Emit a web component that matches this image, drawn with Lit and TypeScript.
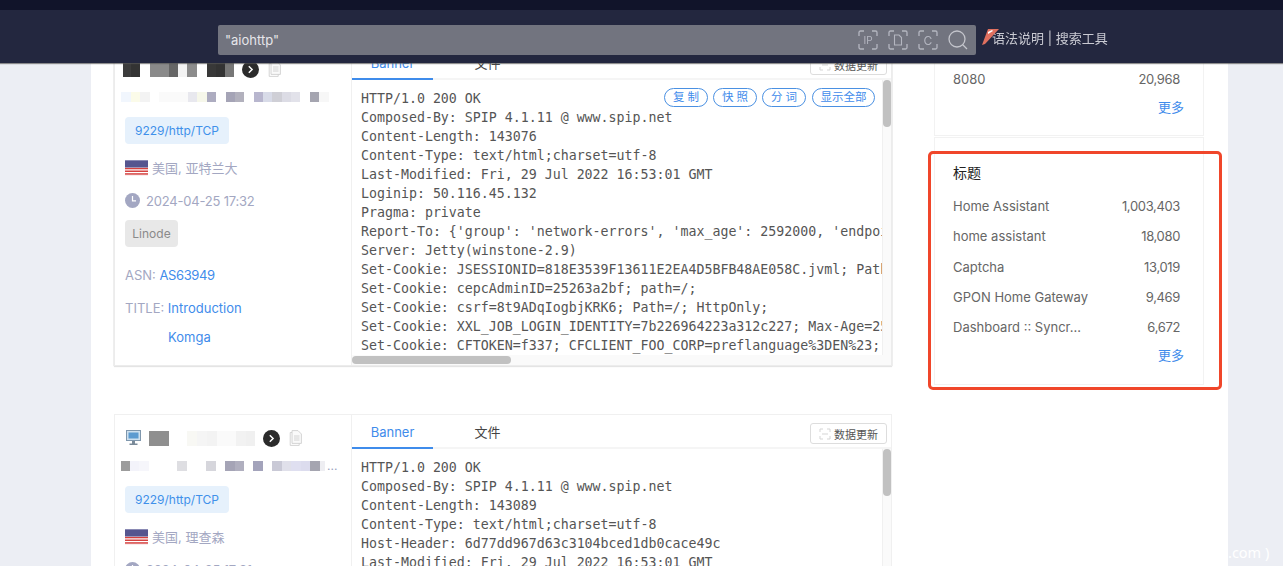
import { LitElement, html, css, svg } from "lit";
import { customElement } from "lit/decorators.js";

type Block = [number, string];
interface CardData {
  row1: Block[];
  row2: Block[];
  monitor: boolean;
  ellipsis: boolean;
  city: string;
  date: string;
  lines: string[];
  pills: boolean;
  extra: boolean;
  thumbH: boolean;
}

const card1: CardData = {
  row1: [[8, "#3c3c3c"], [9, "#333"], [10, "#fff"], [19, "#8a8a8a"], [9, "#666"], [9, "#f3f3f3"], [10, "#8c8c8c"], [10, "#fff"], [9, "#383838"], [9, "#333"], [9, "#777"]],
  row2: [[10, "#f1f6fd"], [9, "#fbfbe9"], [10, "#f3f3f3"], [9, "#fff"], [29, "#fafafa"], [9, "#e8e8ee"], [10, "#f6f7ea"], [9, "#adacc0"], [10, "#fff"], [9, "#a5a4b6"], [9, "#b2b1bd"], [10, "#fff"], [9, "#b8b6ce"], [9, "#d8dbe8"], [10, "#cfcfd6"], [9, "#dcdce5"], [9, "#e2e2ea"], [10, "#fff"], [9, "#a5a5b0"], [10, "#f7f7f7"]],
  monitor: false,
  ellipsis: false,
  city: "美国, 亚特兰大",
  date: "2024-04-25 17:32",
  pills: true,
  extra: true,
  thumbH: true,
  lines: [
    "HTTP/1.0 200 OK",
    "Composed-By: SPIP 4.1.11 @ www.spip.net",
    "Content-Length: 143076",
    "Content-Type: text/html;charset=utf-8",
    "Last-Modified: Fri, 29 Jul 2022 16:53:01 GMT",
    "Loginip: 50.116.45.132",
    "Pragma: private",
    "Report-To: {'group': 'network-errors', 'max_age': 2592000, 'endpoints': []}",
    "Server: Jetty(winstone-2.9)",
    "Set-Cookie: JSESSIONID=818E3539F13611E2EA4D5BFB48AE058C.jvml; Path=/;",
    "Set-Cookie: cepcAdminID=25263a2bf; path=/;",
    "Set-Cookie: csrf=8t9ADqIogbjKRK6; Path=/; HttpOnly;",
    "Set-Cookie: XXL_JOB_LOGIN_IDENTITY=7b226964223a312c227; Max-Age=2592000;",
    "Set-Cookie: CFTOKEN=f337; CFCLIENT_FOO_CORP=preflanguage%3DEN%23;",
  ],
};

const card2: CardData = {
  row1: [[20, "#8f8f8f"], [18, "#fff"], [10, "#f8f8f4"], [10, "#f5f5f5"], [10, "#f3f3f3"], [19, "#fafafa"], [10, "#f2f2f2"], [9, "#f0f0f0"]],
  row2: [[9, "#9c9c9c"], [9, "#f3f3fa"], [10, "#f6f6fb"], [28, "#fff"], [10, "#dedee2"], [19, "#fff"], [10, "#d6d6dc"], [9, "#fff"], [10, "#a5a4b6"], [9, "#b0afbf"], [9, "#fff"], [10, "#a3a3bb"], [9, "#fff"], [10, "#c9c9d6"], [9, "#e0e0ea"], [10, "#dfdff0"], [9, "#dcdcee"], [10, "#a5a5b0"], [5, "#eeeef2"]],
  monitor: true,
  ellipsis: true,
  city: "美国, 理查森",
  date: "2024-04-25 17:31",
  pills: false,
  extra: false,
  thumbH: false,
  lines: [
    "HTTP/1.0 200 OK",
    "Composed-By: SPIP 4.1.11 @ www.spip.net",
    "Content-Length: 143089",
    "Content-Type: text/html;charset=utf-8",
    "Host-Header: 6d77dd967d63c3104bced1db0cace49c",
    "Last-Modified: Fri, 29 Jul 2022 16:53:01 GMT",
  ],
};

const titles: [string, string][] = [
  ["Home Assistant", "1,003,403"],
  ["home assistant", "18,080"],
  ["Captcha", "13,019"],
  ["GPON Home Gateway", "9,469"],
  ["Dashboard :: Syncr...", "6,672"],
];

const corners = svg`<path d="M1 6V2.5A1.5 1.5 0 0 1 2.5 1H6M14 1h3.500A1.500 1.500 0 0 1 19 2.500V6M19 14v3.500a1.500 1.500 0 0 1-1.500 1.500H14M6 19H2.500A1.500 1.500 0 0 1 1 17.500V14" fill="none" stroke="#b4b6c0" stroke-width="1.300"/>`;

const flag = html`<svg class="flag" viewBox="0 0 23 16" width="23" height="16">
  <rect width="23" height="16" fill="#fff"/>
  ${[0, 1, 2, 3].map((i) => svg`<rect y="${i * 2.7 + 7.800}" width="23" height="1.500" fill="#d5413f"/>`)}
  <rect width="23" height="7.500" fill="#55558f"/>
  <rect y="0" width="23" height="1" fill="#8a8ab4"/>
</svg>`;

const docIcon = html`<svg class="doc" viewBox="0 0 14 16" width="14" height="16">
  <path d="M3 .6h6l3.400 3.400v9.400H3z" fill="#fafafa" stroke="#cfcfcf" stroke-width=".9"/>
  <path d="M3 2.500H1.200v12.900h9v-2" fill="none" stroke="#cfcfcf" stroke-width=".9"/>
  <path d="M5 6h5.500M5 8h5.500M5 10h5.500" stroke="#cfcfcf" stroke-width=".9"/>
</svg>`;

const go = html`<svg class="go" viewBox="0 0 17 17" width="17" height="17">
  <circle cx="8.500" cy="8.500" r="8.500" fill="#2b2b2b"/>
  <path d="M6.800 5.200l3.300 3.300-3.300 3.300" fill="none" stroke="#fff" stroke-width="1.500"/>
</svg>`;

const monitorIcon = html`<svg class="mon" viewBox="0 0 15 16" width="15" height="16">
  <rect x=".5" y=".5" width="14" height="10" fill="#cfe0ee" stroke="#7f97ad"/>
  <rect x="2.500" y="2.500" width="10" height="6" fill="#5d9bd0"/>
  <path d="M6 11h3v2.500h2.500V15h-8v-1.500H6z" fill="#7a8a99"/>
</svg>`;

const clockIcon = html`<svg class="clock" viewBox="0 0 15 15" width="15" height="15">
  <circle cx="7.500" cy="7.500" r="7.500" fill="#a3a7c2"/>
  <path d="M7.500 3v4.800H11" fill="none" stroke="#fff" stroke-width="1.200"/>
</svg>`;

@customElement("result-card")
export class ResultCard extends LitElement {
  static properties = { data: { attribute: false } };
  data!: CardData;

  static styles = css`
    :host { display: block; }
    .card {
      display: flex; width: 778px; height: 321px; box-sizing: border-box;
      background: #fff; border: 1px solid #f0f0f0;
      font-family: Inter, "Noto Sans CJK SC", sans-serif;
    }
    .card.strong { border-color: #ececec; box-shadow: 0 1px 1px #e4e4e4, 1px 0 0 #f0f0f0, -1px 0 0 #f0f0f0; }
    .left {
      width: 237px; flex: none; box-sizing: border-box; padding: 14px 0 0 10px;
      display: flex; flex-direction: column; align-items: flex-start; border-right: 1px solid #f0f0f0;
    }
    .r1 { display: flex; align-items: center; height: 18px; width: 225px; margin-left: -2px; }
    .mosaic { display: flex; align-items: stretch; filter: blur(.5px); flex: none; }
    .r1 .mosaic { height: 15px; margin-right: 8px; }
    .mon { margin: 0 8px 0 3px; flex: none; }
    .doc { margin-left: 9px; flex: none; }
    .go { flex: none; }
    .r2 { display: flex; align-items: center; height: 12px; margin: 13px 0 0 -4px; width: 222px; }
    .r2 .mosaic { height: 10px; }
    .dots { color: #9a9fc0; font-size: 12px; line-height: 10px; margin-left: 2px; }
    .tag { display: flex; align-items: center; border-radius: 4px; font-size: 12px; box-sizing: border-box; height: 27px; }
    .tag.port { margin-top: 14px; width: 104px; justify-content: center; background: #e6f1fc; color: #4090ea; }
    .tag.org { margin-top: 11px; width: 53px; justify-content: center; background: #e8e8e8; color: #8a8a8a; }
    .meta { display: flex; align-items: center; color: #a3a7c2; font-size: 13px; height: 17px; }
    .meta.loc { margin-top: 15px; gap: 4px; }
    .meta.time { margin-top: 16px; gap: 6px; letter-spacing: -.2px; }
    .line { font-size: 13px; color: #a3a7c2; height: 20px; line-height: 20px; white-space: nowrap; }
    .line a { color: #3f8ceb; }
    .asn { margin-top: 18px; }
    .asn a { letter-spacing: -.4px; }
    .ttl { margin-top: 13px; }
    .ttl2 { margin-top: 9px; padding-left: 43px; }
    .right { flex: 1; min-width: 0; display: flex; flex-direction: column; position: relative; }
    .tabs {
      display: flex; height: 34px; box-sizing: border-box; flex: none; align-items: stretch;
      border-bottom: 2px solid #f5f5f5; font-size: 13px; position: relative;
    }
    .tab { width: 81px; box-sizing: border-box; display: flex; align-items: center; justify-content: center; color: #444; margin-bottom: -2px; }
    .tab.on { color: #3f8ceb; border-bottom: 2px solid #3f8ceb; padding-top: 2px; }
    .tab + .tab { margin-left: 15px; width: 79px; padding-bottom: 2px; }
    .refresh {
      margin: 8px 4px 0 auto; height: 21px; width: 77px; box-sizing: border-box;
      border: 1px solid #ddd; border-radius: 3px; display: flex; align-items: center; justify-content: center;
      gap: 3px; font-size: 11px; color: #555;
    }
    .body { flex: 1; min-height: 0; display: flex; flex-direction: column; }
    .upper { flex: 1; min-height: 0; display: flex; }
    .text {
      flex: 1; min-width: 0; overflow: hidden; padding: 9px 0 0 9px; margin: 0; box-sizing: border-box;
      font: 13.28px/19px "DejaVu Sans Mono", monospace; color: #555; white-space: pre;
    }
    .text div { width: fit-content; }
    .vbar { width: 9px; flex: none; background: #fafafa; border-left: 1px solid #f0f0f0; box-sizing: border-box; }
    .vbar i { display: block; width: 8px; height: 47px; border-radius: 4px; background: #c1c1c1; }
    .hbar { height: 10px; flex: none; background: #fafafa; }
    .hbar i { display: block; width: 159px; height: 8px; margin-top: 1px; border-radius: 4px; background: #c1c1c1; }
    .pills { position: absolute; top: 42px; left: 312px; display: flex; gap: 5px; }
    .pill {
      height: 19px; box-sizing: border-box; border: 1px solid #4a90e2; border-radius: 10px; background: #fff;
      color: #3f8ceb; font-size: 11.500px; line-height: 17px; width: 44px; text-align: center; letter-spacing: 3px; padding-left: 3px;
    }
    .pill.wide { width: 63px; letter-spacing: 0; padding-left: 0; margin-left: 1px; }
  `;

  private mosaic(blocks: Block[]) {
    return html`<div class="mosaic">${blocks.map(([w, c]) => html`<span style="width:${w}px;background:${c}"></span>`)}</div>`;
  }

  render() {
    const d = this.data;
    return html`<div class="card ${d.extra ? "strong" : ""}">
      <div class="left">
        <div class="r1">
          ${d.monitor ? monitorIcon : ""}
          ${this.mosaic(d.row1)}
          ${go}${docIcon}
        </div>
        <div class="r2">
          ${this.mosaic(d.row2)}
          ${d.ellipsis ? html`<span class="dots">...</span>` : ""}
        </div>
        <div class="tag port">9229/http/TCP</div>
        <div class="meta loc">${flag}<span>${d.city}</span></div>
        <div class="meta time">${clockIcon}<span>${d.date}</span></div>
        <div class="tag org">Linode</div>
        <div class="line asn">ASN: <a>AS63949</a></div>
        <div class="line ttl">TITLE: <a>Introduction</a></div>
        <div class="line ttl2"><a>Komga</a></div>
      </div>
      <div class="right">
        <div class="tabs">
          <div class="tab on">Banner</div>
          <div class="tab">文件</div>
          <div class="refresh">
            <svg viewBox="0 0 12 12" width="12" height="12"><path d="M1 4V1h3M8 1h3v3M11 8v3H8M4 11H1V8M3 6h6" fill="none" stroke="#d5d5d5"/></svg>
            <span>数据更新</span>
          </div>
        </div>
        <div class="body">
          <div class="upper">
            <div class="text">${d.lines.map((l) => html`<div>${l}</div>`)}</div>
            <div class="vbar"><i></i></div>
          </div>
          ${d.thumbH ? html`<div class="hbar"><i></i></div>` : ""}
        </div>
        ${d.pills
          ? html`<div class="pills">
              <div class="pill">复制</div>
              <div class="pill">快照</div>
              <div class="pill">分词</div>
              <div class="pill wide">显示全部</div>
            </div>`
          : ""}
      </div>
    </div>`;
  }
}

@customElement("app-root")
export class AppRoot extends LitElement {
  static styles = css`
    :host { display: block; width: 1286px; height: 571px; background: #fff; overflow: hidden; }
    .page {
      width: 1283px; height: 566px; overflow: hidden; position: relative; display: flex; flex-direction: column;
      font-family: Inter, "Noto Sans CJK SC", sans-serif; filter: blur(.3px);
    }
    .header { flex: none; height: 63px; background: #23273f; border-top: 10px solid #11142a; box-sizing: border-box; position: relative; z-index: 2; display: flex; align-items: flex-start; padding: 15px 0 0 218px; box-shadow: 0 1px 1px #555a; }
    .search {
      width: 758px; height: 30px; background: #72747f; border-radius: 2px; display: flex; align-items: center;
      box-sizing: border-box; padding: 0 8px 0 7px; color: #e6e6ea; font-size: 13px; flex: none;
    }
    .q { flex: 1; }
    .ico { margin-left: 10px; flex: none; }
    .ico.first { margin-left: 0; }
    .links { margin: 5px 0 0 6px; position: relative; padding-left: 10px; color: #c9cad2; font-size: 13px; line-height: 17px; white-space: nowrap; }
    .ribbon { position: absolute; left: 0; top: -1px; }
    .main { flex: 1; min-height: 0; display: flex; background: #eceef4; }
    .content { margin-left: 91px; width: 1137px; background: #fff; display: flex; padding-left: 23px; box-sizing: border-box; overflow: hidden; }
    .cards { margin-top: -18px; width: 778px; flex: none; display: flex; flex-direction: column; gap: 48px; }
    .side { margin: -18px 0 0 42px; width: 270px; flex: none; display: flex; flex-direction: column; gap: 1px; color: #666; font-size: 13px; }
    .box { border: 1px solid #f2f2f2; box-sizing: border-box; padding: 0 19px 0 18px; }
    .box.top { height: 91px; padding-top: 18px; }
    .box.title { height: 248px; padding-top: 25px; }
    h3 { margin: 0 0 8px; font-weight: 400; font-size: 14px; line-height: 20px; color: #222; }
    .row { display: flex; justify-content: space-between; height: 30.300px; align-items: center; padding-right: 4px; }
    .row span + span { letter-spacing: -.35px; }
    .more { color: #3f8ceb; text-align: right; line-height: 20px; margin-top: 3px; }
    .mark { position: absolute; left: 928px; top: 151px; width: 294px; height: 239px; box-sizing: border-box; border: 3px solid #f0462a; border-radius: 5px; z-index: 3; }
    .wm { position: absolute; left: 1228px; top: 542px; color: #fff; font: 14.500px/20px "Noto Sans", sans-serif; z-index: 3; }
  `;

  render() {
    return html`<div class="page">
      <header class="header">
        <div class="search">
          <span class="q">"aiohttp"</span>
          <svg class="ico first" viewBox="0 0 20 20" width="20" height="20">${corners}<text x="10" y="14" text-anchor="middle" font-size="10" font-family="Inter" fill="#b4b6c0">IP</text></svg>
          <svg class="ico" viewBox="0 0 20 20" width="20" height="20">${corners}<path d="M6.500 5h4.500l2.500 2.500V15h-7z" fill="none" stroke="#b4b6c0" stroke-width="1.100"/></svg>
          <svg class="ico" viewBox="0 0 20 20" width="20" height="20">${corners}<text x="10" y="14.500" text-anchor="middle" font-size="12" font-family="Inter" fill="#b4b6c0">C</text></svg>
          <svg class="ico" viewBox="0 0 20 20" width="20" height="20"><circle cx="9" cy="9" r="8" fill="none" stroke="#c4c5cc" stroke-width="1.300"/><path d="M14.500 14.500l4.500 4.500" stroke="#c4c5cc" stroke-width="1.300"/></svg>
        </div>
        <div class="links">
          <svg class="ribbon" viewBox="0 0 17 16" width="17" height="16"><path d="M6 0h11L3 15 0 16z" fill="#e0705f"/><path d="M6 3l4-2 1 1-5 3z" fill="#fff"/></svg>
          语法说明 | 搜索工具
        </div>
      </header>
      <div class="main">
        <div class="content">
          <div class="cards">
            <result-card .data=${card1}></result-card>
            <result-card .data=${card2}></result-card>
          </div>
          <aside class="side">
            <section class="box top">
              <div class="row"><span>8080</span><span>20,968</span></div>
              <div class="more">更多</div>
            </section>
            <section class="box title">
              <h3>标题</h3>
              ${titles.map(([n, v]) => html`<div class="row"><span>${n}</span><span>${v}</span></div>`)}
              <div class="more">更多</div>
            </section>
          </aside>
        </div>
      </div>
      <div class="mark"></div>
      <div class="wm">.com )</div>
    </div>`;
  }
}
